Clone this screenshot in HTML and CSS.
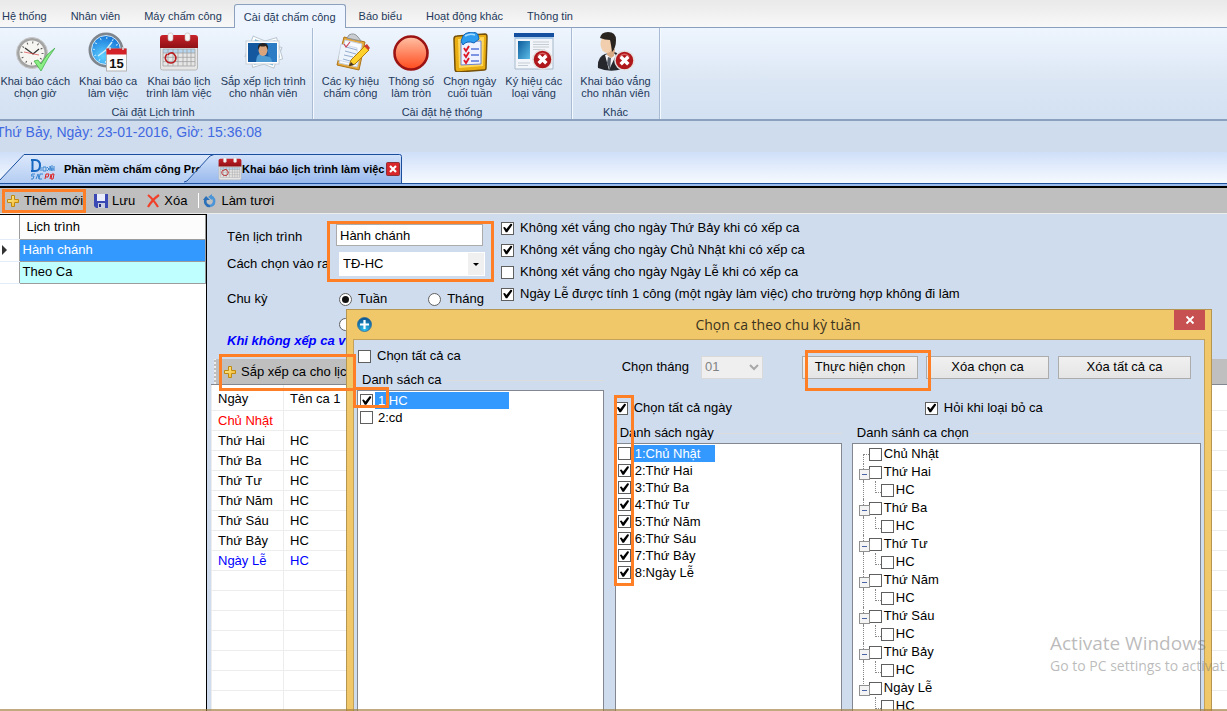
FILE: index.html
```html
<!DOCTYPE html>
<html lang="vi">
<head>
  <meta charset="UTF-8">
  <meta name="viewport" content="width=device-width, initial-scale=1.0">
  <title>Khai báo lịch trình làm việc</title>
  <link rel="stylesheet" href="styles.css">
</head>
<body>
  <!-- Shared symbols -->
  <svg class="sprite" aria-hidden="true">
    <defs>
      <linearGradient id="gold" x1="0" y1="0" x2="1" y2="1">
        <stop offset="0" stop-color="#fff3a0"/><stop offset="1" stop-color="#f0b020"/>
      </linearGradient>
      <linearGradient id="tabFill" x1="0" y1="0" x2="0" y2="1">
        <stop offset="0" stop-color="#dce8fb"/><stop offset="1" stop-color="#b4cdf2"/>
      </linearGradient>
      <linearGradient id="tabFillOn" x1="0" y1="0" x2="0" y2="1">
        <stop offset="0" stop-color="#d3e2fa"/><stop offset="1" stop-color="#97b8ec"/>
      </linearGradient>
      <linearGradient id="redTop" x1="0" y1="0" x2="0" y2="1">
        <stop offset="0" stop-color="#c8232a"/><stop offset="1" stop-color="#8e1014"/>
      </linearGradient>
      <radialGradient id="blueFace" cx=".4" cy=".7" r=".7">
        <stop offset="0" stop-color="#5fd0ff"/><stop offset="1" stop-color="#1272d8"/>
      </radialGradient>
      <linearGradient id="orangeBall" x1="0" y1="0" x2="0" y2="1">
        <stop offset="0" stop-color="#ffc3a8"/><stop offset=".5" stop-color="#ff8560"/><stop offset="1" stop-color="#ff4a1c"/>
      </linearGradient>
      <radialGradient id="blueBall" cx=".5" cy=".9" r=".9">
        <stop offset="0" stop-color="#2ec4f4"/><stop offset="1" stop-color="#0a4f8c"/>
      </radialGradient>
      <linearGradient id="sky" x1="0" y1="0" x2="1" y2="1">
        <stop offset="0" stop-color="#0d5c9c"/><stop offset="1" stop-color="#5bbce6"/>
      </linearGradient>
    </defs>
    <symbol id="i-plus" viewBox="0 0 14 14">
      <path d="M5.500 1.500h3v4h4v3h-4v4h-3v-4h-4v-3h4z" fill="url(#gold)" stroke="#c08a10"/>
    </symbol>
    <symbol id="i-calendar" viewBox="0 0 40 40">
      <rect x="1.500" y="12" width="37" height="26" rx="2" fill="#e6e6e6" stroke="#b8b8b8"/>
      <rect x="4" y="17" width="32" height="4" fill="#b5d6ee"/>
      <path d="M4 17h32v17H4zM4 21h32M4 25.300h32M4 29.600h32M9 17v17M14 17v17M19 17v17M24 17v17M28 17v17M32 17v17" fill="none" stroke="#a2a2a2" stroke-width=".8"/>
      <path d="M1 6q0-3 3-3h32q3 0 3 3v10H1z" fill="url(#redTop)"/>
      <rect x="9" y="1" width="5" height="8" rx="2" fill="#f6f6f6" stroke="#c5b5b5" stroke-width=".6"/>
      <rect x="26" y="1" width="5" height="8" rx="2" fill="#f6f6f6" stroke="#c5b5b5" stroke-width=".6"/>
      <path d="M8 22c-4 5 0 9 4 9s7-5 3-9c-2-2-5-1-6 1" fill="none" stroke="#b81c20" stroke-width="1.600"/>
    </symbol>
    <symbol id="i-no" viewBox="0 0 22 22">
      <circle cx="11" cy="11" r="10" fill="#b0171b" stroke="#e4e0e0" stroke-width="1.600"/>
      <path d="M6 7q5-5 10 0" fill="none" stroke="#d8605f" stroke-width="1.500"/>
      <path d="M7 7l8 8M15 7l-8 8" stroke="#fff" stroke-width="3.600"/>
    </symbol>
  </svg>

  <nav class="menu">
    <a href="#">Hệ thống</a>
    <a href="#">Nhân viên</a>
    <a href="#">Máy chấm công</a>
    <a href="#" class="active">Cài đặt chấm công</a>
    <a href="#">Báo biểu</a>
    <a href="#">Hoạt động khác</a>
    <a href="#">Thông tin</a>
  </nav>

  <div class="ribbon">
    <section class="group schedule">
      <div class="tools">
        <button type="button">
          <svg viewBox="0 0 40 40"><circle cx="17" cy="21" r="14" fill="#f7f5f2" stroke="#a3a3a3" stroke-width="3"/><circle cx="17" cy="21" r="15.500" fill="none" stroke="#c9c9c9"/><circle cx="17" cy="21" r="10.500" fill="none" stroke="#555" stroke-width="2" stroke-dasharray="1 4.500"/><path d="M10 16l8 6 6-5" fill="none" stroke="#333" stroke-width="1.300"/><path d="M9 20l15 3" stroke="#d44" stroke-width=".7"/><path d="M19 29l4-1 3 4Q31 22 40 16 33 25 26 39z" fill="#8aee84" stroke="#35a83b" stroke-width=".7"/></svg>
          <span>Khai báo cách<br>chọn giờ</span>
        </button>
        <button type="button">
          <svg viewBox="0 0 40 40"><circle cx="18" cy="18" r="16" fill="url(#blueFace)" stroke="#7e858c" stroke-width="3"/><circle cx="18" cy="18" r="14.500" fill="none" stroke="#cfe8fa"/><circle cx="18" cy="18" r="12" fill="none" stroke="#bfe9ff" stroke-width="2" stroke-dasharray="1 5.280"/><path d="M10 24l8-6 6-8" fill="none" stroke="#cdefff" stroke-width="1.500"/><rect x="18.500" y="17" width="20" height="22" fill="#fafafa" stroke="#b3b3b3"/><path d="M18.500 16.500h20v6h-20z" fill="#d42027"/><path d="M22 15v3M35 15v3" stroke="#ddd" stroke-width="1.500"/><text x="28.500" y="36" class="day">15</text></svg>
          <span>Khai báo ca<br>làm việc</span>
        </button>
        <button type="button">
          <svg viewBox="0 0 40 40"><use href="#i-calendar"/></svg>
          <span>Khai báo lịch<br>trình làm việc</span>
        </button>
        <button type="button">
          <svg viewBox="0 0 40 40"><g transform="rotate(22 20 20)"><rect x="5" y="9" width="31" height="22" fill="#fff" stroke="#b9c6d2"/><rect x="8" y="11" width="26" height="18" fill="#4aa6dc"/></g><g transform="rotate(-16 20 20)"><rect x="6" y="10" width="31" height="22" fill="#fff" stroke="#b9c6d2"/><rect x="8" y="12" width="27" height="18" fill="#78bfe8"/></g><rect x="3" y="9" width="33" height="23" fill="#fff" stroke="#c8d0d8"/><rect x="5" y="11" width="29" height="19" fill="#1459a0"/><path d="M24 11h10v19h-8z" fill="#2b7cc4"/><path d="M13 30q0-8 6-9l3 3q7 0 7 6z" fill="#4d9bd2"/><ellipse cx="20" cy="18" rx="4.500" ry="6" fill="#d9a47c"/><path d="M15 18q-1-7 5-7 6 0 5 7l-2-4q-4 1-6 0z" fill="#27211f"/></svg>
          <span>Sắp xếp lịch trình<br>cho nhân viên</span>
        </button>
      </div>
      <h2>Cài đặt Lịch trình</h2>
    </section>
    <section class="group system">
      <div class="tools">
        <button type="button">
          <svg viewBox="0 0 40 40"><path d="M13 5l21 5-6 28-22-5z" fill="#e5a93b" stroke="#ad7419"/><path d="M14 8l17 4-5 23-18-4z" fill="#f7faff" stroke="#c5cfdd"/><path d="M10 12l16 4 1 17-20-5z" fill="#eef4fc" stroke="#b9c8dc" stroke-width=".6"/><path d="M15 15l11 3M14 19l11 3M13 23l9 2M12 27l7 2" stroke="#95aed0"/><path d="M13 12l2 3 4-5" fill="none" stroke="#c45" stroke-width="1.200"/><path d="M18 3q5-3 9 2l3 4-14-3z" fill="#c9cdd2" stroke="#8f949a"/><path d="M20 28L34 14l4 4-14 14-6 2z" fill="#ffd12d" stroke="#b27d0b"/><path d="M33 14l3-2 3 4-2 2z" fill="#cc3b2e"/><path d="M18 34l2-4 3 3z" fill="#463524"/></svg>
          <span>Các ký hiệu<br>chấm công</span>
        </button>
        <button type="button">
          <svg viewBox="0 0 40 40"><circle cx="20" cy="21" r="16.500" fill="url(#orangeBall)" stroke="#9c1313" stroke-width="2.600"/></svg>
          <span>Thông số<br>làm tròn</span>
        </button>
        <button type="button">
          <svg viewBox="0 0 40 40"><path d="M7 4l28-2q2 0 2 3l-1 31q0 2-2 2L8 40q-3 0-3-3L4 7q0-3 3-3z" fill="#e9ae13" stroke="#74500a" stroke-width="1.500"/><path d="M8 7l26-2-1 29-24 2z" fill="#ffd75a"/><path d="M11 10l20-1v23l-20 1z" fill="#eef1ff" stroke="#6d82cf"/><path d="M13 4q1-3 8-4 6 0 7 3l1 4-5 4q-7-3-11 2l-2-4z" fill="#2e9df0" stroke="#1465b4"/><path d="M15 4q5-3 10-1" stroke="#a5dcff" fill="none" stroke-width="1.500"/><path d="M21 17h8M21 23h8M21 29h8" stroke="#5776d8" stroke-width="1.500"/><path d="M14 16l2 3 3-5M14 22l2 3 3-5M14 28l2 3 3-5" fill="none" stroke="#df1825" stroke-width="1.900"/></svg>
          <span>Chọn ngày<br>cuối tuần</span>
        </button>
        <button type="button">
          <svg viewBox="0 0 40 40"><path d="M1 2h38v35H1z" fill="#f2f6fa" stroke="#a6b8ca"/><path d="M0 1h40v4H0z" fill="#1550a0"/><path d="M1 5h38v2H1z" fill="#a9c9e8"/><path d="M4 9h12v18H4z" fill="url(#sky)"/><path d="M19 10h16M19 12.500h16M19 15h16M19 17.500h12M4 31h12M4 33.500h10" stroke="#c5cbd2"/><use href="#i-no" x="18" y="17" width="21" height="21"/></svg>
          <span>Ký hiệu các<br>loại vắng</span>
        </button>
      </div>
      <h2>Cài đặt hệ thống</h2>
    </section>
    <section class="group other">
      <div class="tools">
        <button type="button">
          <svg viewBox="0 0 40 40"><path d="M2 36q-1-11 7-14l9-2q8 1 8 17-12 4-24-1z" fill="#25272c"/><path d="M9 23l4 15 7-15-4-3z" fill="#f1f3f6"/><path d="M12 25l3 1-1 12-3-7z" fill="#555b66"/><path d="M11 17h8l-1 7-3 2-4-3z" fill="#d9ab84"/><ellipse cx="11" cy="12" rx="6.500" ry="9" fill="#f1cfae"/><path d="M4 6q1-6 8-6 8 0 8 8 0 8-4 12-1-8-2-12-5 0-10-2z" fill="#2a2421"/><use href="#i-no" x="18" y="18" width="21" height="21"/></svg>
          <span>Khai báo vắng<br>cho nhân viên</span>
        </button>
      </div>
      <h2>Khác</h2>
    </section>
  </div>

  <p class="clock">Thứ Bảy, Ngày: 23-01-2016, Giờ: 15:36:08</p>

  <div class="doc-tabs">
    <a href="#" class="doc-tab first">
      <svg class="shape" viewBox="0 0 214 29" aria-hidden="true"><path d="M-1 27L24 .500H214V29H0z" fill="url(#tabFill)"/><path d="M-1 27L24 .500H214" fill="none" stroke="#1b4f9e"/></svg>
      <svg class="logo" viewBox="0 0 24 22" aria-hidden="true"><path d="M1.500 2h2.500q5 0 5 5.500T4 13H1.500zM0 2h3M0 13h3" fill="none" stroke="#1766c0" stroke-width="2"/><path d="M10 13V9M12 9h3v4h-3zM16 9l2 2-2 2M19 13V8l2 5V7M23 8v5M18 11h5" fill="none" stroke="#3a86d0"/><path d="M4 16H1l-1 2h3l-1 3H0M5 21l2-5 1 5M12 16H9l-1 5h3" fill="none" stroke="#3a86d0"/><path d="M14 21l1-5h3l-1 3h-2M19 21l1-5M21 16h2l-1 5h-2z" fill="none" stroke="#e02020"/></svg>
      <span>Phần mềm chấm công Pro</span>
    </a>
    <a href="#" class="doc-tab current">
      <svg class="shape" viewBox="0 0 218 29" aria-hidden="true"><path d="M0 28.500L4 27 26 3 30 .500H215.500q2 0 2 2V29H0z" fill="url(#tabFillOn)"/><path d="M0 28L3 27 26 2 30 .500H215.500q2 0 2 2V29" fill="none" stroke="#1b4f9e"/></svg>
      <svg class="cal" viewBox="0 0 40 40" aria-hidden="true"><use href="#i-calendar"/></svg>
      <span>Khai báo lịch trình làm việc</span>
      <svg class="close" viewBox="0 0 14 14" aria-hidden="true"><rect x=".500" y=".500" width="13" height="13" rx="1" fill="#d8262b" stroke="#8c3036"/><path d="M4 4l6 6M10 4l-6 6" stroke="#fff" stroke-width="2.200"/></svg>
    </a>
  </div>

  <div class="toolbar">
    <button type="button" class="add"><svg viewBox="0 0 14 14"><use href="#i-plus"/></svg>Thêm mới<i class="mark"></i></button>
    <button type="button" class="save"><svg viewBox="0 0 14 14"><path d="M0 0h14v14H2l-2-2z" fill="#3a49b4"/><path d="M3 0h8v7H3z" fill="#e8ecfb"/><path d="M4 9h7v5H4z" fill="#c9cde0"/><path d="M5 10h2v3H5z" fill="#27307a"/></svg>Lưu</button>
    <button type="button"><svg viewBox="0 0 14 14"><path d="M2 1q5 4 10 12M13 1Q6 6 2 13" fill="none" stroke="#f0402a" stroke-width="2.200"/></svg>Xóa</button>
    <button type="button" class="refresh"><svg viewBox="0 0 14 14"><path d="M3 5a4.500 4.500 0 0 0 4 7" fill="none" stroke="#2a6fb8" stroke-width="2.600"/><path d="M0 6l3-4 4 4z" fill="#2a6fb8"/><path d="M7 12q5-1 4-6.500Q10 3 7.500 2.500" fill="none" stroke="#4a94d8" stroke-width="2.600"/><path d="M9 0v6L5 3z" fill="#4a94d8"/></svg>Làm tươi</button>
  </div>

  <main class="workspace">
    <aside class="schedules">
      <table>
        <thead>
          <tr><th class="pick"></th><th>Lịch trình</th></tr>
        </thead>
        <tbody>
          <tr class="selected"><td class="pick"><b class="arrow"></b></td><td>Hành chánh</td></tr>
          <tr class="tinted"><td class="pick"></td><td>Theo Ca</td></tr>
        </tbody>
      </table>
    </aside>

    <section class="editor">
      <form class="settings">
        <div class="fields">
          <label for="name">Tên lịch trình</label>
          <input type="text" id="name" value="Hành chánh">
          <label for="mode">Cách chọn vào ra</label>
          <div class="combo">
            <select id="mode"><option>TĐ-HC</option></select>
            <i class="mark"></i>
          </div>
          <span>Chu kỳ</span>
          <div class="radios">
            <label><input type="radio" name="cycle" checked>Tuần</label>
            <label><input type="radio" name="cycle">Tháng</label>
          </div>
          <span></span>
          <div class="radios"><input type="radio" name="cycle" aria-label="Khác"></div>
        </div>
        <div class="rules">
          <label><input type="checkbox" checked>Không xét vắng cho ngày Thứ Bảy khi có xếp ca</label>
          <label><input type="checkbox" checked>Không xét vắng cho ngày Chủ Nhật khi có xếp ca</label>
          <label><input type="checkbox">Không xét vắng cho ngày Ngày Lễ khi có xếp ca</label>
          <label><input type="checkbox" checked>Ngày Lễ được tính 1 công (một ngày làm việc) cho trường hợp không đi làm</label>
        </div>
      </form>
      <p class="hint">Khi không xếp ca v</p>
      <div class="shift-bar">
        <button type="button"><svg viewBox="0 0 14 14"><use href="#i-plus"/></svg>Sắp xếp ca cho lịch<i class="mark"></i></button>
      </div>
      <table class="shifts">
        <thead>
          <tr><th class="day-col">Ngày</th><th>Tên ca 1</th></tr>
        </thead>
        <tbody>
          <tr class="sunday"><td>Chủ Nhật</td><td></td></tr>
          <tr><td>Thứ Hai</td><td>HC</td></tr>
          <tr><td>Thứ Ba</td><td>HC</td></tr>
          <tr><td>Thứ Tư</td><td>HC</td></tr>
          <tr><td>Thứ Năm</td><td>HC</td></tr>
          <tr><td>Thứ Sáu</td><td>HC</td></tr>
          <tr><td>Thứ Bảy</td><td>HC</td></tr>
          <tr class="holiday"><td>Ngày Lễ</td><td>HC</td></tr>
          <tr><td></td><td></td></tr>
          <tr><td></td><td></td></tr>
          <tr><td></td><td></td></tr>
          <tr><td></td><td></td></tr>
          <tr><td></td><td></td></tr>
          <tr><td></td><td></td></tr>
          <tr><td></td><td></td></tr>
        </tbody>
      </table>
    </section>
  </main>

  <div class="dialog" role="dialog" aria-labelledby="dialog-title">
    <header class="title-bar">
      <svg viewBox="0 0 15 15" aria-hidden="true"><circle cx="7.500" cy="7.500" r="7" fill="url(#blueBall)" stroke="#2c6c9c" stroke-width=".8"/><path d="M7.500 3v9M3 7.500h9" stroke="#fff" stroke-width="2.200"/></svg>
      <h1 id="dialog-title">Chọn ca theo chu kỳ tuần</h1>
      <button type="button" aria-label="Đóng"><svg viewBox="0 0 10 10"><path d="M1.500 1.500l7 7M8.500 1.500l-7 7" stroke="#fff" stroke-width="1.800"/></svg></button>
    </header>
    <div class="dialog-body">
      <section class="pane shift-pane">
        <label class="all"><input type="checkbox">Chọn tất cả ca</label>
        <h3>Danh sách ca</h3>
        <div class="list">
          <label class="on"><input type="checkbox" checked><span>1:HC</span></label>
          <label><input type="checkbox"><span>2:cd</span></label>
          <i class="mark"></i>
        </div>
      </section>
      <div class="right-side">
        <div class="actions">
          <label for="month">Chọn tháng</label>
          <select id="month" disabled><option>01</option></select>
          <button type="button" class="run">Thực hiện chọn<i class="mark"></i></button>
          <button type="button" class="drop">Xóa chọn ca</button>
          <button type="button" class="clear">Xóa tất cả ca</button>
        </div>
        <section class="pane day-pane">
          <label class="all"><input type="checkbox" checked>Chọn tất cả ngày</label>
          <h3>Danh sách ngày</h3>
          <div class="list">
            <label class="on"><input type="checkbox"><span>1:Chủ Nhật</span></label>
            <label><input type="checkbox" checked><span>2:Thứ Hai</span></label>
            <label><input type="checkbox" checked><span>3:Thứ Ba</span></label>
            <label><input type="checkbox" checked><span>4:Thứ Tư</span></label>
            <label><input type="checkbox" checked><span>5:Thứ Năm</span></label>
            <label><input type="checkbox" checked><span>6:Thứ Sáu</span></label>
            <label><input type="checkbox" checked><span>7:Thứ Bảy</span></label>
            <label><input type="checkbox" checked><span>8:Ngày Lễ</span></label>
            <i class="mark"></i>
          </div>
        </section>
        <section class="pane tree-pane">
          <label class="all"><input type="checkbox" checked>Hỏi khi loại bỏ ca</label>
          <h3>Danh sánh ca chọn</h3>
          <ul class="list tree">
            <li class="leaf"><label><input type="checkbox">Chủ Nhật</label></li>
            <li><label><input type="checkbox">Thứ Hai</label></li>
            <li class="child"><label><input type="checkbox">HC</label></li>
            <li><label><input type="checkbox">Thứ Ba</label></li>
            <li class="child"><label><input type="checkbox">HC</label></li>
            <li><label><input type="checkbox">Thứ Tư</label></li>
            <li class="child"><label><input type="checkbox">HC</label></li>
            <li><label><input type="checkbox">Thứ Năm</label></li>
            <li class="child"><label><input type="checkbox">HC</label></li>
            <li><label><input type="checkbox">Thứ Sáu</label></li>
            <li class="child"><label><input type="checkbox">HC</label></li>
            <li><label><input type="checkbox">Thứ Bảy</label></li>
            <li class="child"><label><input type="checkbox">HC</label></li>
            <li class="last"><label><input type="checkbox">Ngày Lễ</label></li>
            <li class="child end"><label><input type="checkbox">HC</label></li>
          </ul>
        </section>
      </div>
    </div>
  </div>

  <div class="watermark">
    <p class="big">Activate Windows</p>
    <p>Go to PC settings to activat</p>
  </div>
  <div class="bottom-edge"></div>
</body>
</html>
```
FILE: styles.css
```css
* {
  box-sizing: border-box;
}

body {
  margin: 0;
  position: relative;
  display: flex;
  flex-direction: column;
  height: 100vh;
  overflow: hidden;
  background: #cfdcee;
  color: #000;
  font: 13px/18px "Liberation Sans", Arial, sans-serif;
}

h1, h2, h3, p, ul {
  margin: 0;
  padding: 0;
  font-weight: normal;
}

a {
  color: inherit;
  text-decoration: none;
}

button, input, select {
  margin: 0;
  padding: 0;
  color: inherit;
  font: inherit;
}

button {
  position: relative;
  border: 0;
  background: none;
  white-space: nowrap;
}

label {
  white-space: nowrap;
}

svg {
  display: block;
  flex: none;
}

.sprite {
  position: absolute;
  width: 0;
  height: 0;
}

/* Orange highlight frames */
.mark {
  position: absolute;
  z-index: 20;
  border: 3px solid #ff7f27;
  pointer-events: none;
}

/* Check boxes and radios */
input[type="checkbox"],
input[type="radio"] {
  appearance: none;
  flex: none;
  width: 13px;
  height: 13px;
  border: 1px solid #5f5f5f;
  background: #fff;
}

input[type="radio"] {
  border-radius: 50%;
}

input[type="checkbox"]:checked::before {
  content: "";
  display: block;
  width: 11px;
  height: 11px;
  background: #000;
  clip-path: polygon(10% 45%, 26% 40%, 40% 60%, 78% 12%, 92% 14%, 92% 26%, 48% 88%, 34% 88%);
}

input[type="radio"]:checked::before {
  content: "";
  display: block;
  width: 7px;
  height: 7px;
  margin: 2px;
  border-radius: 50%;
  background: #111;
}

/* Menu */
.menu {
  display: flex;
  flex: none;
  height: 28px;
  padding-top: 4px;
  border-bottom: 1px solid #8ba0bc;
  background: linear-gradient(#e9e9e9, #f8f8f8);
  color: #1e395b;
  font-size: 11px;
}

.menu a {
  height: 24px;
  padding: 0 10px;
  margin-right: 4px;
  line-height: 24px;
  white-space: nowrap;
}

.menu a:first-child {
  padding-left: 2px;
}

.menu .active {
  padding: 0 9px;
  margin: 0 3px 0 -2px;
  border: 1px solid #8ba0bc;
  border-bottom: 0;
  border-radius: 3px 3px 0 0;
  background: #eef5fe;
}

/* Ribbon */
.ribbon {
  display: flex;
  flex: none;
  height: 93px;
  border-bottom: 2px solid #8ba0bc;
  background: linear-gradient(#eef5fe, #dbe6f4 60%, #d3e1f2);
  color: #1e395b;
  font-size: 11px;
}

.group {
  display: flex;
  flex-direction: column;
  border-right: 1px solid #a9bcd4;
  box-shadow: 1px 0 #f4f9ff;
}

.schedule {
  width: 313px;
  padding-right: 6px;
}

.system { width: 259px; }
.other { width: 88px; }

.tools {
  display: flex;
  justify-content: center;
  gap: 9px;
  padding-top: 4px;
}

.tools button {
  display: flex;
  flex-direction: column;
  align-items: center;
  gap: 3px;
  line-height: 12px;
  text-align: center;
}

.tools svg {
  width: 40px;
  height: 40px;
}

.group h2 {
  margin-top: 7px;
  font-size: 11px;
  line-height: 13px;
  text-align: center;
}

.day {
  font: bold 13px "Liberation Sans", Arial, sans-serif;
  text-anchor: middle;
  fill: #111;
}

.clock {
  flex: none;
  height: 31px;
  margin-left: -4px;
  color: #4169e1;
  font-size: 14px;
  line-height: 23px;
  white-space: nowrap;
}

/* Document tabs */
.doc-tabs {
  display: flex;
  flex: none;
  height: 36px;
  padding-top: 2px;
  border-bottom: 2px solid #000;
  background: linear-gradient(#cfdff8, #f6faff 31px, #1b4f9e 31px, #1b4f9e 32px, #9dbcee 32px);
  font-size: 11px;
  font-weight: bold;
}

.doc-tab {
  position: relative;
  display: flex;
  align-items: center;
  height: 29px;
  white-space: nowrap;
}

.doc-tab > * {
  position: relative;
}

.doc-tab .shape {
  position: absolute;
  top: 0;
  left: 0;
  width: 100%;
  height: 29px;
}

.first {
  width: 214px;
  padding-left: 31px;
  gap: 9px;
  overflow: hidden;
}

.current {
  width: 218px;
  margin-left: -30px;
  padding-left: 34px;
}

.logo {
  width: 24px;
  height: 22px;
}

.cal {
  width: 24px;
  height: 24px;
}

.close {
  width: 14px;
  height: 14px;
  margin-left: 2px;
}

/* Toolbar */
.toolbar {
  display: flex;
  flex: none;
  align-items: center;
  height: 26px;
  padding-left: 6px;
  gap: 11px;
  border-bottom: 1px solid #ececec;
  background: #bfbfbf;
}

.toolbar button,
.shift-bar button {
  display: flex;
  align-items: center;
  gap: 4px;
  height: 24px;
}

.toolbar svg,
.shift-bar svg {
  width: 14px;
  height: 14px;
}

.add .mark {
  inset: 0 -3px 0 -4px;
}

.refresh::before {
  content: "";
  width: 1px;
  height: 15px;
  background: #fff;
}

/* Workspace */
.workspace {
  display: flex;
  flex: 1;
  min-height: 0;
}

table {
  border-collapse: collapse;
  width: 100%;
}

th, td {
  padding: 0;
  font-weight: normal;
  text-align: left;
}

.schedules {
  flex: none;
  width: 207px;
  border: solid #000;
  border-width: 1px 1px 0 0;
  background: #fff;
}

.schedules th,
.schedules td {
  height: 22px;
  padding-left: 3px;
  border: 1px solid #9c9c9c;
}

.schedules th {
  height: 24px;
  padding-left: 7px;
  border-top: 0;
  background: #fcfcfc;
}

.schedules .pick {
  width: 19px;
  border-left: 0;
  border-bottom-color: #e3edf9;
  background: #fff;
}

.selected td {
  background: #3399ff;
  color: #fff;
}

.tinted td {
  background: #c0ffff;
}

.arrow {
  display: block;
  width: 5px;
  border: solid transparent;
  border-width: 5px 0 5px 5px;
  border-left-color: #333;
}

.schedules td.pick {
  padding-left: 2px;
}

.editor {
  display: flex;
  flex: 1;
  flex-direction: column;
  min-width: 0;
  padding: 3px 0 0 4px;
}

.settings {
  display: flex;
  padding-left: 16px;
}

.fields {
  display: grid;
  grid-template-columns: 109px 165px;
  grid-template-rows: 26px 32px 38px 12px;
  align-items: center;
  padding-top: 5px;
}

.fields > label {
  overflow: hidden;
}

.fields > label:first-child {
  padding-top: 4px;
}

#name {
  width: 147px;
  height: 22px;
  padding: 0 3px;
  border: 1px solid #ababab;
  background: #fff;
}

.combo {
  position: relative;
  width: 146px;
  margin-left: 3px;
}

.combo::after {
  content: "";
  position: absolute;
  top: 11px;
  right: 6px;
  border: solid transparent;
  border-width: 3px 3px 0;
  border-top-color: #000;
}

.combo .mark {
  inset: -31px -9px -6px -12px;
}

#mode {
  appearance: none;
  display: block;
  width: 100%;
  height: 24px;
  padding-left: 3px;
  border: 1px solid #fff;
  background: linear-gradient(#f0f0f0, #f0f0f0) right / 16px 100% no-repeat #fff;
}

.radios {
  display: flex;
  gap: 41px;
  padding-left: 3px;
}

.radios label {
  display: flex;
  align-items: center;
  gap: 6px;
}

.rules label {
  display: flex;
  align-items: center;
  height: 22px;
  gap: 6px;
}

.hint {
  margin: 2px 0 9px 16px;
  color: #0000ff;
  font-style: italic;
  font-weight: bold;
  white-space: nowrap;
}

.shift-bar {
  display: flex;
  flex: none;
  align-items: center;
  height: 25px;
  padding-left: 12px;
  border-radius: 3px 0 0 3px;
  background: linear-gradient(#bfbfbf 50%, transparent 50%) 3px 5px / 2px 4px repeat-y, linear-gradient(90deg, transparent 3px, #eee 3px, #eee 5px, #bfbfbf 5px);
}

.shift-bar .mark {
  inset: -6px auto auto -4px;
  width: 137px;
  height: 37px;
}

.shifts {
  border-left: 1px solid #828790;
  border-top: 1px solid #828790;
  background: #fff;
}

.shifts th,
.shifts td {
  height: 20px;
  padding-left: 6px;
  border: solid #ededed;
  border-width: 0 0 1px 1px;
}

.shifts th {
  height: 26px;
  padding-top: 3px;
  border-top: 1px solid #828790;
}

.shifts .day-col {
  width: 72px;
}

.sunday { color: #ff0000; }
.holiday { color: #0000ff; }

/* Dialog */
.dialog {
  position: absolute;
  top: 309px;
  right: 15px;
  bottom: 0;
  left: 346px;
  display: flex;
  flex-direction: column;
  padding: 0 6px;
  border: 1px solid #b5954f;
  border-bottom: 0;
  background: #f0c869;
}

.title-bar {
  display: flex;
  flex: none;
  align-items: center;
  height: 29px;
  padding-left: 4px;
}

.title-bar svg {
  width: 15px;
  height: 15px;
}

.title-bar h1 {
  flex: 1;
  padding-left: 10px;
  color: #3c3320;
  font: 14px/18px "Open Sans", "Noto Sans", sans-serif;
  text-align: center;
}

.title-bar button {
  display: flex;
  align-items: center;
  justify-content: center;
  align-self: flex-start;
  width: 31px;
  height: 20px;
  background: #c75050;
}

.title-bar button svg {
  width: 10px;
  height: 10px;
}

.dialog-body {
  display: grid;
  grid-template-columns: 247fr 587fr;
  gap: 11px;
  flex: 1;
  min-height: 0;
  padding: 7px 3px 0;
  border: solid #c4a25a;
  border-width: 1px 1px 0;
  background: #cfdcee;
}

.pane {
  display: flex;
  flex-direction: column;
  min-width: 0;
  min-height: 0;
}

.all {
  display: flex;
  align-items: center;
  gap: 6px;
  height: 18px;
}

.pane h3 {
  display: flex;
  align-items: center;
  gap: 4px;
  padding-left: 5px;
  margin: 7px 0 1px;
  font-size: 13px;
  white-space: nowrap;
}

.pane h3::after {
  content: "";
  flex: 1;
  height: 1px;
  background: #dcdcdc;
}

.list {
  position: relative;
  flex: 1;
  min-height: 0;
  padding: 1px;
  border: 1px solid #828790;
  border-bottom: 0;
  background: #fff;
  list-style: none;
}

.list > label {
  display: flex;
  align-items: center;
  height: 17px;
  line-height: 17px;
}

.list > label input {
  margin: 0 2px 0 1px;
}

.list > label span {
  padding-left: 3px;
}

.on span {
  width: 134px;
  background: #3399ff;
  color: #fff;
}

.shift-pane .all { padding-left: 1px; }
.shift-pane h3 { margin-top: 6px; }
.shift-pane .list .mark { inset: -4px auto auto -5px; width: 36px; height: 21px; }

.right-side {
  display: grid;
  grid-template-columns: 227fr 349fr;
  grid-template-rows: auto 1fr;
  column-gap: 10px;
  min-height: 0;
}

.actions {
  grid-column: 1 / 3;
  display: flex;
  align-items: center;
  height: 40px;
  padding: 0 10px 0 7px;
  margin-bottom: 12px;
}

#month {
  appearance: none;
  width: 62px;
  height: 23px;
  margin-left: 12px;
  padding-left: 3px;
  border: 1px solid #d9d9d9;
  border-radius: 0;
  background: url("data:image/svg+xml,%3Csvg xmlns='http://www.w3.org/2000/svg' width='10' height='8'%3E%3Cpath d='M1 2l4 4 4-4' fill='none' stroke='%23a8a8a8' stroke-width='2'/%3E%3C/svg%3E") right 3px center no-repeat #efefef;
  color: #838383;
  opacity: 1;
}

.actions button {
  height: 23px;
  border: 1px solid #acacac;
  background: linear-gradient(#f0f0f0, #e5e5e5);
}

.run { width: 116px; margin-left: auto; }
.drop { width: 123px; margin-left: 8px; }
.clear { width: 133px; margin-left: 9px; }
.run .mark { inset: -7px -14px -13px 2px; }

.day-pane .on span { width: 82px; }
.day-pane .list > label span { padding-left: 2px; }
.day-pane .list .mark { inset: -49px auto auto -2px; width: 20px; height: 191px; }
.tree-pane .all { margin-left: 73px; }

.tree li {
  position: relative;
  height: 18px;
  padding-left: 15px;
}

.tree li::before {
  content: "";
  position: absolute;
  top: 0;
  left: 9px;
  height: 18px;
  border-left: 1px dotted #888;
}

.tree .leaf::before {
  top: 9px;
  width: 5px;
  height: 9px;
  border-top: 1px dotted #888;
}

.tree .last::before { height: 9px; }
.tree .end::before { display: none; }

.tree li:not(.leaf):not(.child)::after {
  content: "";
  position: absolute;
  top: 6px;
  left: 5px;
  width: 9px;
  height: 9px;
  border: 1px solid #919191;
  background: linear-gradient(#4b63a7, #4b63a7) center / 5px 1px no-repeat #f4f4f4;
}

.tree .child {
  padding-left: 27px;
}

.tree .child::after {
  content: "";
  position: absolute;
  top: 0;
  left: 21px;
  width: 5px;
  height: 11px;
  border: dotted #888;
  border-width: 0 0 1px 1px;
}

.tree label {
  display: flex;
  align-items: center;
  gap: 2px;
}

/* Screen edge */
.watermark {
  position: absolute;
  top: 630px;
  left: calc(100% - 177px);
  z-index: 10;
  color: rgba(120, 120, 120, .5);
  font: 14px/20px "Open Sans", "Noto Sans", sans-serif;
  white-space: nowrap;
}

.watermark .big {
  font-size: 19px;
  line-height: 26px;
}

.bottom-edge {
  position: absolute;
  right: 0;
  bottom: 0;
  left: 0;
  z-index: 30;
  height: 2px;
  background: rgba(160, 125, 60, .65);
}
```
